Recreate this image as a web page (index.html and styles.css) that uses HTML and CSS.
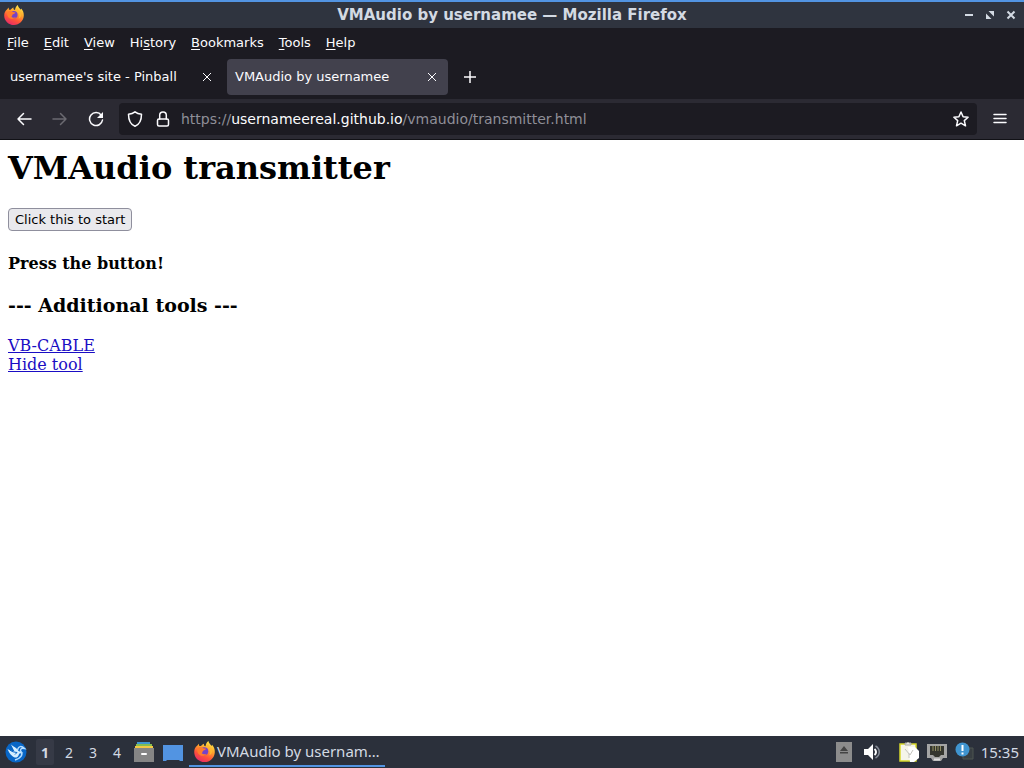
FILE: index.html
```html
<!DOCTYPE html>
<html lang="en">
<head>
<meta charset="utf-8">
<title>VMAudio by usernamee</title>
<link rel="stylesheet" href="styles.css">
</head>
<body>
<svg class="defs" aria-hidden="true">
  <defs>
    <linearGradient id="flame" x1="0.8" y1="0" x2="0.3" y2="1">
      <stop offset="0" stop-color="#fff04a"/><stop offset="0.4" stop-color="#ffa22c"/><stop offset="0.7" stop-color="#ff5338"/><stop offset="1" stop-color="#e62a6a"/>
    </linearGradient>
    <symbol id="firefox" viewBox="0 0 20 20">
      <path fill="url(#flame)" d="M3.2 4.2 4.6 2.6 5 4.7l1.6.1C7.500 3.400 8.800 2.700 9.600 2.500 9 4 10 4.600 11 5c.3-2 1-3.700 2.800-5 .2 2 1.600 2.900 3 4.700l.4-1.200c1.600 1.700 2.800 4.100 2.600 7.100C19.600 16 15.300 20 10 20 4.500 20 .2 15.700.2 10.400c0-2.500 1-4.800 3-6.200z"/>
      <circle cx="9.800" cy="9.800" r="3.800" fill="#7542c9"/>
      <path fill="#ff7b2c" d="M3.500 6.800c2-1.600 4-1.400 5.300.1l2.700.5c-.3 1.200-2.400 1.500-2.900 2-.5.700-.2 1.700-1.200 2.300 1.300 1.300 3.100 1.200 4.600.4-1.100 2-4.200 2.700-6.500 1.200C3.300 11.800 2.600 9.200 3.500 6.800z"/>
      <path fill="#ffb72f" d="M11.500 5.200c3.700 1.700 5 5.400 3 8.300 2-.5 2.900-2.400 2.700-4.500C17 6.600 14.200 5.500 13.300 2.900z"/>
    </symbol>
  </defs>
</svg>

<div class="desktop">
  <header class="titlebar">
    <svg class="app-logo" aria-hidden="true"><use href="#firefox"/></svg>
    <div class="window-title">VMAudio by usernamee — Mozilla Firefox</div>
    <div class="window-controls">
      <button aria-label="Minimize"><svg viewBox="0 0 10 10"><path d="M1 5h8" stroke-width="2"/></svg></button>
      <button aria-label="Restore"><svg viewBox="0 0 10 10"><path class="solid" d="M3.500 1H9v5.500zM1 3.500V9h5.500z"/></svg></button>
      <button aria-label="Close window"><svg viewBox="0 0 10 10"><path d="m1.500 1.500 7 7m0-7-7 7" stroke-width="2"/></svg></button>
    </div>
  </header>

  <nav class="menubar" aria-label="Menu bar">
    <button><u>F</u>ile</button>
    <button><u>E</u>dit</button>
    <button><u>V</u>iew</button>
    <button>Hi<u>s</u>tory</button>
    <button><u>B</u>ookmarks</button>
    <button><u>T</u>ools</button>
    <button><u>H</u>elp</button>
  </nav>

  <div class="tabstrip">
    <div class="tab">
      <button class="tab-label">usernamee's site - Pinball</button>
      <button class="tab-close" aria-label="Close tab"><svg viewBox="0 0 10 10"><path d="m1 1 8 8m0-8-8 8"/></svg></button>
    </div>
    <div class="tab active">
      <button class="tab-label">VMAudio by usernamee</button>
      <button class="tab-close" aria-label="Close tab"><svg viewBox="0 0 10 10"><path d="m1 1 8 8m0-8-8 8"/></svg></button>
    </div>
    <button class="new-tab" aria-label="New tab"><svg viewBox="0 0 12 12"><path d="M6 0v12M0 6h12"/></svg></button>
  </div>

  <div class="toolbar">
    <button class="tool" aria-label="Back"><svg viewBox="0 0 16 16"><path d="M15 8H2M7.500 2.500 2 8l5.500 5.500"/></svg></button>
    <button class="tool disabled" aria-label="Forward" disabled><svg viewBox="0 0 16 16"><path d="M1 8h13M8.500 2.500 14 8l-5.500 5.500"/></svg></button>
    <button class="tool" aria-label="Reload"><svg viewBox="0 0 16 16"><path d="M13.300 4.200A6.500 6.500 0 1 0 14.500 9"/><path class="solid" d="M15 1v6H9z"/></svg></button>
    <div class="urlbar">
      <button class="url-icon" aria-label="Tracking protection"><svg viewBox="0 0 16 16"><path d="M8 .8C6.200 2.300 4 3 1.500 3.200c0 6 1.500 10 6.500 12 5-2 6.500-6 6.500-12C12 3 9.800 2.300 8 .8z"/></svg></button>
      <button class="url-icon" aria-label="Connection secure"><svg viewBox="0 0 16 16"><rect x="2.500" y="8" width="11" height="7" rx="1.500"/><path d="M4.700 8V4.300a3.300 3.300 0 0 1 6.600 0V8"/></svg></button>
      <div class="url">https://<span>usernameereal.github.io</span>/vmaudio/transmitter.html</div>
      <button class="url-icon" aria-label="Bookmark this page"><svg viewBox="0 0 16 16"><path d="m8 1 2.100 4.700 5 .5-3.800 3.400 1.200 5.200L8 12.200l-4.500 2.600 1.200-5.200L.9 6.200l5-.5z"/></svg></button>
    </div>
    <button class="tool" aria-label="Application menu"><svg viewBox="0 0 16 16"><path d="M2 3.500h12M2 7.500h12M2 11.500h12"/></svg></button>
  </div>

  <main class="page">
    <h1>VMAudio transmitter</h1>
    <button class="start">Click this to start</button>
    <h4>Press the button!</h4>
    <h3>--- Additional tools ---</h3>
    <a href="#cable">VB-CABLE</a>
    <a href="#hide">Hide tool</a>
  </main>

  <footer class="taskbar">
    <button class="start-menu" aria-label="Main menu"><svg viewBox="0 0 22 22"><circle cx="11" cy="11" r="10.500" fill="#0866c6"/><path d="M2.500 8c2.500 2 4.500 1.500 7 2.500L6 3.500c3 2.500 6 3.500 7.500 6.500l5 2-4 .5c-1 1.500-1 3-3 4-3 .5-6.500-2.500-9-8.500z" fill="#d6efff"/><path d="M12.500 9c1-4 4-4.500 7-1.500-3-.5-4 0-4 2.500 3 3 1 7-5.500 9" fill="none" stroke="#b5ddff" stroke-width="1.500"/><path d="M5 9c2 2 4 2 7 2.500l-2 2" fill="none" stroke="#0866c6"/></svg></button>
    <div class="workspaces">
      <button class="current">1</button><button>2</button><button>3</button><button>4</button>
    </div>
    <button class="launcher" aria-label="File manager"><svg viewBox="0 0 20 20"><path fill="#3d96cf" d="M3 0h13v3H3z"/><path fill="#83bd52" d="M2 2h16v3H2z"/><path fill="#f2c843" d="M1 4h18v3H1z"/><path fill="#858585" d="M0 6h20v14H0z"/><rect x="7" y="11" width="6" height="2" rx="1" fill="#fff"/></svg></button>
    <button class="launcher" aria-label="Show desktop"><svg viewBox="0 0 20 20"><path fill="#5294e2" d="M0 3h20v16h-3l-1-1H4l-1 1H0z"/></svg></button>
    <button class="task"><svg class="task-logo" aria-hidden="true"><use href="#firefox"/></svg><span>VMAudio by usernam…</span></button>
    <div class="tray">
      <button aria-label="Eject media"><svg viewBox="0 0 20 20"><path fill="#8c8c8c" d="M2 0h16v20H2z"/><path fill="#444" d="m10 4 4 5H6zM6 10h8v1.500H6z"/></svg></button>
      <button class="volume" aria-label="Volume"><svg viewBox="0 0 20 20"><path fill="#fff" d="M2 7h4l5-5v16l-5-5H2z"/><path d="M12.500 7c2 1.500 2 4.500 0 6" fill="none" stroke="#fff" stroke-width="2"/><path d="M13.500 4c5 3 5 9 0 12" fill="none" stroke="#858b96" stroke-width="1.500"/></svg></button>
      <button aria-label="Clipboard"><svg viewBox="0 0 20 20"><path fill="#f5f5e9" stroke="#d8d72b" stroke-width="1.500" d="M1 2h16v17H1z"/><path fill="#e7e7e2" stroke="#a8a8a0" d="M6 3V1h2l1-1 1 1h2v2z"/><path fill="#fff" d="M9 5h7l4 4v7l-5 4h-4z"/><path fill="none" stroke="#c4c4be" d="m6 7 5 6 3-5M10 11v5"/></svg></button>
      <button aria-label="Network"><svg viewBox="0 0 20 20"><path fill="#a4a4a4" d="M0 2h20v14h-4l-2 3H6l-2-3H0z"/><path fill="#35362f" d="M3 4h14v9h-3l-2 2H8l-2-2H3z"/><path d="M6 4v5M8.500 4v5M11 4v5M13.500 4v5" stroke="#938f63"/><path d="M7 17.500h6" stroke="#ddd" stroke-width="2"/></svg></button>
      <button aria-label="Updates available"><svg viewBox="0 0 20 20"><path fill="#383e42" stroke="#4c5550" d="M8 6h10v11H8z"/><circle cx="7.500" cy="7.500" r="7" fill="#3f94d0"/><path d="M7.500 3v6M7.500 10.500v2" stroke="#fff" stroke-width="2"/></svg></button>
    </div>
    <time class="clock">15:35</time>
  </footer>
</div>
</body>
</html>
```
FILE: styles.css
```css
* { box-sizing: border-box; }

body {
  margin: 0;
  font-family: "DejaVu Sans", sans-serif;
  font-size: 13px;
  color: #fbfbfe;
}

button {
  font: inherit;
  color: inherit;
  background: none;
  border: 0;
  padding: 0;
}

svg {
  display: block;
  fill: none;
  stroke: currentColor;
}

.defs { position: absolute; width: 0; height: 0; }
symbol, .app-logo, .task-logo { stroke: none; }
.solid { fill: currentColor; stroke: none; }

.desktop {
  display: flex;
  flex-direction: column;
  min-height: 100vh;
}

.titlebar {
  display: grid;
  grid-template-columns: 64px 1fr 64px;
  align-items: center;
  height: 28px;
  padding: 0 4px;
  background: #2f343f;
  border-top: 2px solid #5294e2;
  color: #d3dae3;
}
.app-logo { width: 20px; height: 20px; }
.window-title {
  font-size: 15px;
  font-weight: bold;
  text-align: center;
}
.window-controls { display: flex; justify-content: flex-end; gap: 11px; padding-right: 4px; }
.window-controls svg { width: 10px; height: 10px; }

.menubar {
  display: flex;
  gap: 15px;
  height: 28px;
  padding: 0 7px;
  background: #1c1b22;
}
.menubar u { text-underline-offset: 2px; }

.tabstrip {
  display: flex;
  align-items: center;
  height: 43px;
  padding: 0 2px 2px;
  background: #1c1b22;
}
.tab {
  display: flex;
  align-items: center;
  justify-content: space-between;
  width: 221px;
  height: 36px;
  padding: 0 11px 0 8px;
  border-radius: 4px;
  margin-right: 4px;
}
.tab.active { background: #42414d; }
.tab-close svg { width: 10px; height: 10px; }
.new-tab { padding: 0 12px; }
.new-tab svg { width: 12px; height: 12px; stroke-width: 1.5; }

.toolbar {
  display: flex;
  align-items: center;
  height: 41px;
  padding: 0 6px;
  background: #2b2a33;
  border-bottom: 1px solid #111116;
}
.tool { padding: 0 10px; }
.tool svg, .url-icon svg { width: 16px; height: 16px; stroke-width: 1.5; stroke-linecap: round; stroke-linejoin: round; }
.tool.disabled { color: #6b6a71; }
.urlbar {
  flex: 1;
  display: flex;
  align-items: center;
  gap: 12px;
  height: 32px;
  margin: 0 5px;
  padding: 0 8px;
  border-radius: 4px;
  background: #1c1b22;
}
.url { flex: 1; margin-left: -2px; font-size: 14px; color: #8f8f98; }
.url span { color: #fbfbfe; }

.page {
  flex: 1;
  display: flex;
  flex-direction: column;
  align-items: flex-start;
  padding: 8px;
  background: #fff;
  color: #000;
  font-family: "DejaVu Serif", serif;
  font-size: 16px;
  line-height: 19px;
}
h1 { margin: 0 0 20px; font-size: 32px; line-height: 40px; }
h4 { margin: 23px 0 0; font-size: 16px; line-height: 19px; }
h3 { margin: 21px 0 19px; font-size: 19px; line-height: 23px; }
.page a { color: #1a0dc4; }
.start {
  height: 23px;
  padding: 0 6px;
  border: 1px solid #8f8f9d;
  border-radius: 4px;
  background: #e9e9ed;
  font: 13px "DejaVu Sans", sans-serif;
}

.taskbar {
  display: flex;
  align-items: center;
  height: 32px;
  padding: 0 5px;
  background: #2b303b;
  color: #d3dae3;
  font-family: "Noto Sans", sans-serif;
  font-size: 15px;
}
.taskbar svg { width: 20px; height: 20px; stroke: none; }
.start-menu { margin-right: 9px; }
.start-menu svg { width: 22px; height: 22px; }
.workspaces { display: flex; margin-right: 2px; font-size: 14px; }
.workspaces button { width: 18px; height: 26px; margin-right: 6px; border-radius: 2px; }
.workspaces .current { background: #363a46; font-weight: bold; }
.launcher { margin-right: 9px; }
.task {
  display: flex;
  align-items: center;
  gap: 2px;
  width: 196px;
  height: 30px;
  margin-left: -3px;
  padding: 0 5px;
  border-bottom: 2px solid #5294e2;
  white-space: nowrap;
}
.task svg { flex: none; width: 21px; height: 21px; }
.tray { display: flex; gap: 8px; margin-left: auto; }
.tray .volume { margin-right: 9px; }
.clock { margin-left: 6px; }
```
